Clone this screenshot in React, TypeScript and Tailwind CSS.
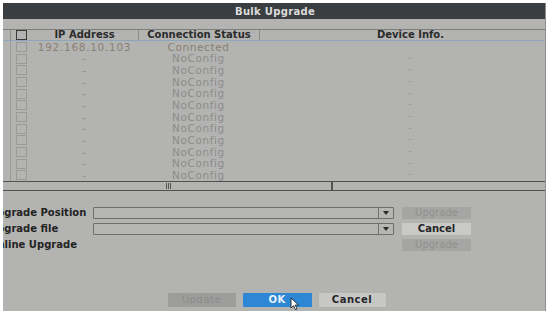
import React from 'react';

type Row = { ip: string; status: string; info: string; connected?: boolean };

const rows: Row[] = [
  { ip: '192.168.10.103', status: 'Connected', info: '', connected: true },
  ...Array.from({ length: 11 }, () => ({ ip: '-', status: 'NoConfig', info: '-' })),
];

const font = { fontFamily: '"DejaVu Sans", Verdana, sans-serif' };

function Check({ dark }: { dark?: boolean }) {
  return (
    <span
      className={`block w-[11px] h-[10px] border ${dark ? 'border-[#3a3a3a]' : 'border-[#9a9b99]'}`}
    />
  );
}

function Select() {
  return (
    <div className="flex w-[301px] h-[12px] border border-[#6e6f6d] bg-[#b6b7b5] rounded-[1px]">
      <div className="flex-1" />
      <div className="w-[15px] border-l border-[#6e6f6d] flex items-center justify-center">
        <svg width="6" height="4" viewBox="0 0 6 4">
          <path d="M0 0h6L3 4z" fill="#2a2a2a" />
        </svg>
      </div>
    </div>
  );
}

function SideButton({ label, enabled }: { label: string; enabled?: boolean }) {
  return (
    <button
      type="button"
      className={`w-[69px] h-[12px] flex items-center justify-center text-[10px] leading-none ${
        enabled ? 'bg-[#c9cac8] text-[#262626] font-bold' : 'bg-[#a5a6a4] text-[#8f908e] font-normal'
      }`}
    >
      {label}
    </button>
  );
}

function Cursor() {
  return (
    <svg width="10" height="14" viewBox="0 0 10 14" className="absolute left-[47px] top-[4px]">
      <path d="M1 1v10l2.5-2.3 2 4 1.6-.8-2-3.9H8.5z" fill="#fff" stroke="#222" strokeWidth="0.9" />
    </svg>
  );
}

export default function App() {
  return (
    <div className="w-[550px] h-[316px] bg-white overflow-hidden pt-[3px] pl-[3px]" style={font}>
      <div className="w-[543px] h-[308px] bg-[#b3b4b2] overflow-hidden flex flex-col border-r border-[#8d8e8c]">
        {/* Title bar */}
        <div className="h-[16px] shrink-0 bg-[#3b3e41] flex items-center justify-center text-[10px] font-bold text-[#dcdcdc] tracking-[0.3px] pl-[2px]">
          Bulk Upgrade
        </div>

        <div className="h-[10px] shrink-0" />

        {/* Table */}
        <div className="border-t border-[#7d7e7c] shrink-0">
          <div className="flex h-[11px] items-center text-[10px] font-bold text-[#2b2b2b] leading-none border-b border-[#8ea6ba]">
            <div className="w-[7px] shrink-0 h-full" />
            <div className="w-[21px] shrink-0 h-full border-l border-[#8a8b89] flex items-center justify-center">
              <Check dark />
            </div>
            <div className="w-[107px] shrink-0 h-full flex items-center justify-center">IP Address</div>
            <div className="w-[121px] shrink-0 h-full border-l border-[#8a8b89] flex items-center justify-center">
              Connection Status
            </div>
            <div className="w-[302px] shrink-0 h-full border-l border-[#8a8b89] flex items-center justify-center">
              Device Info.
            </div>
          </div>

          {rows.map((r, i) => (
            <div key={i} className="flex h-[11.7px] items-center text-[10.5px] leading-none text-[#8b8c8a]">
              <div className="w-[7px] shrink-0 h-full" />
              <div className="w-[21px] shrink-0 h-full border-l border-[#9a9b99] flex items-center justify-center">
                <Check />
              </div>
              <div
                className={`w-[107px] shrink-0 flex justify-center ${r.connected ? 'text-[#8a7f72] tracking-[0.7px]' : ''}`}
              >
                {r.ip}
              </div>
              <div
                className={`w-[121px] shrink-0 flex justify-center tracking-[0.6px] ${r.connected ? 'text-[#8a7f72]' : ''}`}
              >
                {r.status}
              </div>
              <div className="w-[302px] shrink-0 flex justify-center text-[8px]">{r.info}</div>
            </div>
          ))}

          {/* Horizontal scrollbar */}
          <div className="h-[10px] border-y border-[#505250] flex">
            <div className="w-[330px] shrink-0 h-full border-r-2 border-[#505250] flex items-center justify-center">
              <div className="flex gap-[1px] pl-[2px]">
                <span className="w-px h-[6px] bg-[#555]" />
                <span className="w-px h-[6px] bg-[#555]" />
                <span className="w-px h-[6px] bg-[#555]" />
              </div>
            </div>
            <div className="flex-1" />
          </div>
        </div>

        {/* Upgrade form */}
        <div className="mt-[16px] shrink-0 flex flex-col gap-[4px] text-[10px] font-bold text-[#232323] leading-none">
          <div className="flex items-center h-[12px]">
            <div className="w-[90px] shrink-0 ml-[-14px] whitespace-nowrap">Upgrade Position</div>
            <div className="ml-[14px] shrink-0">
              <Select />
            </div>
            <div className="ml-[8px] shrink-0">
              <SideButton label="Upgrade" />
            </div>
          </div>
          <div className="flex items-center h-[12px]">
            <div className="w-[90px] shrink-0 ml-[-14px] whitespace-nowrap">Upgrade file</div>
            <div className="ml-[14px] shrink-0">
              <Select />
            </div>
            <div className="ml-[8px] shrink-0">
              <SideButton label="Cancel" enabled />
            </div>
          </div>
          <div className="flex items-center h-[12px]">
            <div className="w-[90px] shrink-0 ml-[-14px] whitespace-nowrap">Online Upgrade</div>
            <div className="ml-[14px] w-[301px] shrink-0" />
            <div className="ml-[8px] shrink-0">
              <SideButton label="Upgrade" />
            </div>
          </div>
        </div>

        {/* Bottom buttons */}
        <div className="mt-[42px] shrink-0 flex justify-center gap-[7px] text-[10px] leading-none pl-[5px]">
          <button type="button" className="w-[68px] h-[14px] bg-[#9d9e9c] text-[#8a8b89] tracking-[0.5px]">
            Update
          </button>
          <div className="relative">
            <button
              type="button"
              className="w-[69px] h-[14px] bg-[#2d87d4] text-[#e8f2fb] font-bold tracking-[0.5px]"
            >
              OK
            </button>
            <Cursor />
          </div>
          <button type="button" className="w-[67px] h-[14px] bg-[#c7c8c6] text-[#262626] font-bold tracking-[0.5px]">
            Cancel
          </button>
        </div>
      </div>
    </div>
  );
}
